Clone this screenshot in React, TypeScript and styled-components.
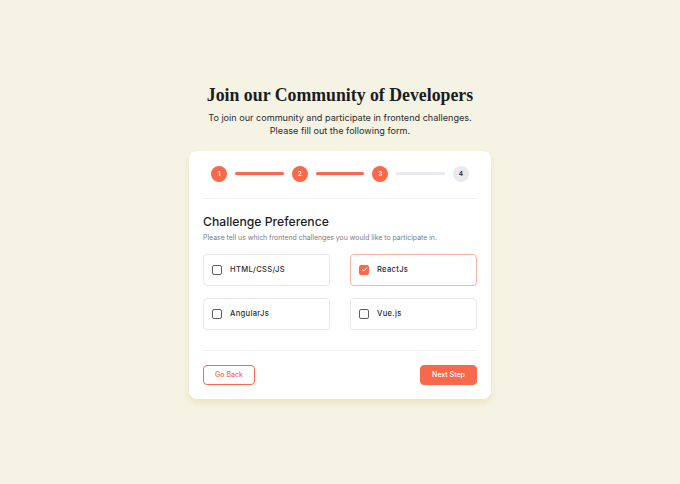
import React, { useState } from "react";
import styled, { createGlobalStyle } from "styled-components";

const GlobalStyle = createGlobalStyle`
  * { box-sizing: border-box; }
  body {
    margin: 0;
    background: #f5f3e3;
    font-family: "Inter", "Open Sans", sans-serif;
    color: #1d1e25;
  }
`;

const orange = "#f7694a";

const Page = styled.div`
  min-height: 100vh;
  display: flex;
  flex-direction: column;
  align-items: center;
  justify-content: center;
  padding-bottom: 1px;
`;

const Heading = styled.h1`
  margin: 0;
  font-family: "Liberation Serif", serif;
  font-weight: 700;
  font-size: 17.8px;
  line-height: 20px;
  color: #1b1c24;
`;

const Intro = styled.p`
  margin: 6px 0 0;
  font-size: 9.1px;
  line-height: 13px;
  text-align: center;
  color: #2b2c33;
`;

const Card = styled.div`
  margin-top: 14px;
  width: 302px;
  background: #fff;
  border-radius: 8px;
  padding: 15px 14px 14px;
  box-shadow: 0 4px 6px rgba(232, 222, 180, 0.7);
`;

const Stepper = styled.div`
  display: flex;
  align-items: center;
  padding: 0 8px 16px;
  border-bottom: 1px solid #f1f1f3;
`;

const Dot = styled.div<{ $done: boolean }>`
  width: 16px;
  height: 16px;
  border-radius: 50%;
  flex-shrink: 0;
  display: flex;
  align-items: center;
  justify-content: center;
  font-size: 6.5px;
  font-weight: 600;
  background: ${(p) => (p.$done ? orange : "#e9e9ee")};
  color: ${(p) => (p.$done ? "#fff" : "#2b2c33")};
`;

const Line = styled.div<{ $done: boolean }>`
  flex: 1;
  height: 3px;
  border-radius: 2px;
  margin: 0 8px;
  background: ${(p) => (p.$done ? orange : "#e9e9ee")};
`;

const Title = styled.h2`
  margin: 15px 0 0;
  font-size: 12.2px;
  font-weight: 500;
  line-height: 16px;
  color: #1d1e25;
`;

const Sub = styled.p`
  margin: 3px 0 0;
  font-size: 6.9px;
  line-height: 10px;
  color: #7b7c86;
`;

const Options = styled.div`
  display: grid;
  grid-template-columns: 1fr 1fr;
  column-gap: 20px;
  row-gap: 12px;
  margin-top: 11px;
  padding-bottom: 20px;
  border-bottom: 1px solid #f1f1f3;
`;

const Option = styled.label<{ $checked: boolean }>`
  height: 32px;
  display: flex;
  align-items: center;
  gap: 8px;
  padding: 0 8px;
  border-radius: 4px;
  cursor: pointer;
  border: 1px solid ${(p) => (p.$checked ? "#f8b4a4" : "#e6e7eb")};
  font-size: 7.6px;
  font-weight: 500;
  letter-spacing: 0.3px;
  color: #2b2c33;
`;

const Box = styled.span<{ $checked: boolean }>`
  width: 10px;
  height: 10px;
  border-radius: 2px;
  display: flex;
  align-items: center;
  justify-content: center;
  border: 1px solid ${(p) => (p.$checked ? orange : "#5d5e66")};
  background: ${(p) => (p.$checked ? orange : "#fff")};
`;

const Actions = styled.div`
  display: flex;
  justify-content: space-between;
  margin-top: 14px;
`;

const Button = styled.button<{ $primary?: boolean }>`
  height: 20px;
  border-radius: 4px;
  font-family: inherit;
  font-size: 7px;
  font-weight: 500;
  cursor: pointer;
  border: 1px solid ${orange};
  background: ${(p) => (p.$primary ? orange : "#fff")};
  color: ${(p) => (p.$primary ? "#fff" : orange)};
  width: ${(p) => (p.$primary ? "57px" : "52px")};
`;

const choices = ["HTML/CSS/JS", "ReactJs", "AngularJs", "Vue.js"];

export default function App() {
  const [picked, setPicked] = useState<string[]>(["ReactJs"]);
  const toggle = (c: string) =>
    setPicked((p) => (p.includes(c) ? p.filter((x) => x !== c) : [...p, c]));

  return (
    <>
      <GlobalStyle />
      <Page>
        <Heading>Join our Community of Developers</Heading>
        <Intro>
          To join our community and participate in frontend challenges.
          <br />
          Please fill out the following form.
        </Intro>
        <Card>
          <Stepper>
            {[1, 2, 3, 4].map((n) => (
              <React.Fragment key={n}>
                <Dot $done={n <= 3}>{n}</Dot>
                {n < 4 && <Line $done={n < 3} />}
              </React.Fragment>
            ))}
          </Stepper>
          <Title>Challenge Preference</Title>
          <Sub>Please tell us which frontend challenges you would like to participate in.</Sub>
          <Options>
            {choices.map((c) => {
              const on = picked.includes(c);
              return (
                <Option key={c} $checked={on} onClick={() => toggle(c)}>
                  <Box $checked={on}>
                    {on && (
                      <svg width="7" height="7" viewBox="0 0 10 10">
                        <path d="M2 5.2l2 2 4-4.4" fill="none" stroke="#fff" strokeWidth="1.4" strokeLinecap="round" strokeLinejoin="round" />
                      </svg>
                    )}
                  </Box>
                  {c}
                </Option>
              );
            })}
          </Options>
          <Actions>
            <Button>Go Back</Button>
            <Button $primary>Next Step</Button>
          </Actions>
        </Card>
      </Page>
    </>
  );
}
